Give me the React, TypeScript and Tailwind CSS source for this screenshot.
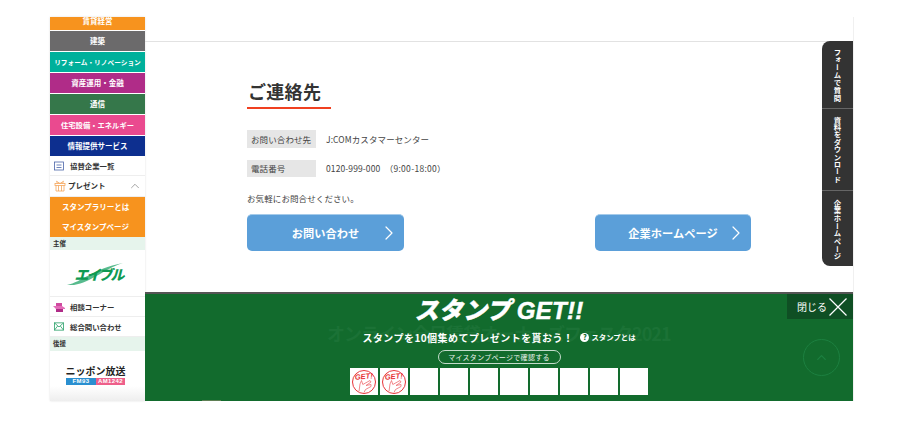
import { ChevronUp, ChevronRight } from "lucide-react";

const JP = "font-['Noto_Sans_CJK_JP','Noto_Sans',sans-serif]";

const CATEGORIES = [
  { label: "建築", cls: "bg-[#6b6a6b] text-[7.5px]" },
  { label: "リフォーム・リノベーション", cls: "bg-[#00b09b] text-[6.7px]" },
  { label: "資産運用・金融", cls: "bg-[#b02c88] text-[7.5px]" },
  { label: "通信", cls: "bg-[#35774a] text-[7.5px]" },
  { label: "住宅設備・エネルギー", cls: "bg-[#ea4a8f] text-[7.3px]" },
  { label: "情報提供サービス", cls: "bg-[#0d2f8f] text-[7.5px]" },
];

function Stamp() {
  return (
    <svg viewBox="0 0 28 28" className="w-7 h-7">
      <circle cx="14" cy="14" r="11.5" fill="none" stroke="#e8343a" strokeWidth="1" />
      <text x="14" y="11" textAnchor="middle" fontSize="7.5" fontWeight="900" fontStyle="italic" fill="#e8343a" fontFamily="Liberation Sans, sans-serif" transform="rotate(-4 14 11)">
        GET!
      </text>
      <path d="M9 23.5 L10 16 L11.5 12.5 L12.8 16.5 L20 12.5 L21 14 L16 17.5 L21 16.5 L21 18.5 L15.5 21.5 L14 24.5" fill="none" stroke="#ef6a6e" strokeWidth="0.8" />
    </svg>
  );
}

function SideLink({ icon, label }: { icon: React.ReactNode; label: string }) {
  return (
    <div className="h-5 flex items-center gap-[5px] pl-[3px] border-b border-[#eeeeee] text-[7.4px] font-bold text-[#333333]">
      <span className="w-[12px] flex justify-center">{icon}</span>
      {label}
    </div>
  );
}

function BlueButton({ label, w }: { label: string; w: string }) {
  return (
    <button className={`${w} relative h-[37px] bg-[#5b9fd9] rounded-[5px] border-t border-[#a5cbea] text-white text-[11.2px] font-bold tracking-[0.1px] flex items-center justify-center`}>
      {label}
      <ChevronRight className="absolute right-[3px] w-6 h-6" strokeWidth={1.2} />
    </button>
  );
}

export default function App() {
  return (
    <div className={`${JP} w-[908px] h-[438px] bg-white pt-[17px] pl-[50px] overflow-hidden`}>
      <div className="flex w-[804px] h-[384px]">
        {/* Sidebar */}
        <aside className="w-[95px] shrink-0 flex flex-col shadow-[0_0_2px_rgba(0,0,0,0.12)]">
          <div className="h-[13px] bg-[#f7931e] text-white text-[7.5px] font-bold text-center leading-[7px] overflow-hidden">賃貸経営</div>
          <div className="flex flex-col gap-px mt-px">
            {CATEGORIES.map((c) => (
              <div key={c.label} className={`${c.cls} h-5 flex items-center justify-center text-white font-bold whitespace-nowrap`}>
                {c.label}
              </div>
            ))}
          </div>
          <SideLink
            label="協賛企業一覧"
            icon={
              <svg viewBox="0 0 10 10" className="w-[10px] h-[10px]" fill="none" stroke="#4a64a8" strokeWidth="0.8">
                <rect x="0.5" y="1" width="9" height="8" />
                <path d="M2.5 4h5M2.5 6.5h5" />
              </svg>
            }
          />
          <div className="h-[21px] flex items-center pl-[4px] pr-[3px] border-b border-[#eeeeee] text-[7.5px] font-bold text-[#333333]">
            <svg viewBox="0 0 12 12" className="w-[12px] h-[12px] mr-[2px]" fill="none" stroke="#f5a65b" strokeWidth="0.8">
              <rect x="1" y="3.5" width="10" height="2" />
              <path d="M2 5.5V11h8V5.5M4.5 5.5V11M7.5 5.5V11M3.5 3.5L2.5 1.2 6 3.5 9.5 1.2 8.5 3.5" />
            </svg>
            プレゼント
            <ChevronUp className="w-[14px] h-[14px] ml-auto text-[#888888]" strokeWidth={1.3} />
          </div>
          <div className="h-10 bg-[#f7931e] flex flex-col text-white text-[7.5px] font-bold">
            <div className="h-5 flex items-center pl-[12px]">スタンプラリーとは</div>
            <div className="h-5 flex items-center pl-[12px]">マイスタンプページ</div>
          </div>
          <div className="h-[13px] bg-[#e6f4ec] flex items-center pl-[3px] text-[6.5px] font-bold text-[#333333]">主催</div>
          <div className="h-[47px] border-b border-[#eeeeee] flex items-center justify-center relative">
            <svg viewBox="0 0 58 24" className="absolute left-[16px] top-[12px] w-[58px] h-[24px]">
              <path d="M1 23 C16 20 26 7 57 1 C36 8 26 20 8 23 Z" fill="#20a468" opacity="0.75" />
            </svg>
            <span className="relative mt-[1px] ml-[2px] text-[#0f9a52] text-[14px] font-black italic tracking-[-2px] leading-none">エイブル</span>
          </div>
          <SideLink
            label="相談コーナー"
            icon={
              <svg viewBox="0 0 12 10" className="w-[12px] h-[10px]">
                <path d="M3 1h6v3H3z" fill="#d04aa0" />
                <path d="M0 4h9l3 2v1H3z" fill="#e36cb8" />
                <path d="M3 7h7v3H3z" fill="#b02c88" />
              </svg>
            }
          />
          <SideLink
            label="総合問い合わせ"
            icon={
              <svg viewBox="0 0 11 9" className="w-[10px] h-[9px]" fill="none" stroke="#2ea36c" strokeWidth="0.9">
                <rect x="0.5" y="0.5" width="10" height="8" />
                <path d="M0.5 0.5l5 4.5 5-4.5M0.5 8.5l3.5-4.5M10.5 8.5L7 4" />
              </svg>
            }
          />
          <div className="h-[14px] bg-[#e6f4ec] flex items-center pl-[3px] text-[6.5px] font-bold text-[#333333]">後援</div>
          <div className="flex-1 bg-gradient-to-b from-white from-70% to-[#eeeeee] flex flex-col items-center pt-[14px] pr-[4px]">
            <div className="text-[10px] leading-[12px] font-bold text-[#222222] whitespace-nowrap">ニッポン放送</div>
            <div className="flex h-[7px] mt-px text-white text-[6px] leading-[7px] font-bold font-['Liberation_Sans',sans-serif] tracking-[0.4px]">
              <span className="w-[30px] bg-[#2a8fd0] text-center">FM93</span>
              <span className="w-[29px] bg-[#ee5f8a] text-center">AM1242</span>
            </div>
          </div>
        </aside>

        {/* Main */}
        <main className="relative flex-1 flex flex-col border-r border-[#f0f0f0] min-w-0">
          <div className="h-[25px] shrink-0 border-b border-[#e2e2e2]" />
          <div className="flex-1 px-[102px]">
            <h2 className="mt-[36px] w-[84px] h-[31px] pl-px text-[18px] leading-[26px] font-bold text-[#333333] border-b-2 border-[#f04020] tracking-[0.3px]">ご連絡先</h2>
            <div className="mt-[21px] flex items-center h-[18px] text-[8.5px] text-[#444444] tracking-[0.1px]">
              <span className="w-[69px] h-[18px] bg-[#e6e6e6] flex items-center pl-[4px]">お問い合わせ先</span>
              <span className="ml-[10px]">J:COMカスタマーセンター</span>
            </div>
            <div className="mt-[12px] flex items-center h-[17px] text-[8.5px] text-[#444444] tracking-[0.1px]">
              <span className="w-[69px] h-[17px] bg-[#e6e6e6] flex items-center pl-[4px]">電話番号</span>
              <span className="ml-[10px] whitespace-pre">0120-999-000　<span className="tracking-[0.3px]">（9:00-18:00）</span></span>
            </div>
            <p className="mt-[15px] text-[8.5px] leading-[12px] text-[#444444] tracking-[0.1px]">お気軽にお問合せください。</p>
            <div className="mt-[10px] flex justify-between">
              <BlueButton label="お問い合わせ" w="w-[157px]" />
              <BlueButton label="企業ホームページ" w="w-[156px]" />
            </div>
          </div>

          {/* Stamp bar */}
          <section className="relative h-[109px] shrink-0 bg-[#126b2d] border-t-2 border-[#555555] flex flex-col items-center overflow-hidden">
            <span className="absolute left-[182px] top-[26px] text-[18px] font-bold text-[#1b7236] whitespace-nowrap tracking-[-1px]">オンライン全日賃貸オーナーズフェスタ2021</span>
            <span className="absolute left-[57px] bottom-0 w-[19px] h-px bg-[#5f7f55]" />
            <div className="relative h-[30px] text-[24px] leading-[30px] font-black italic text-white tracking-[0.3px] [-webkit-text-stroke:0.5px_white]">
              スタンプ <span className="font-['Liberation_Sans',sans-serif]">GET!!</span>
            </div>
            <div className="relative mt-[5px] h-[16px] flex items-center text-white font-bold whitespace-nowrap">
              <span className="text-[10px] tracking-[0.45px]">スタンプを10個集めてプレゼントを貰おう！</span>
              <span className="ml-[7px] w-[9px] h-[9px] rounded-full bg-white text-[#126b2d] text-[7px] leading-[9px] text-center font-black">?</span>
              <span className="ml-[2px] text-[7.4px]">スタンプとは</span>
            </div>
            <div className="relative mt-[5px] w-[123px] h-[14px] rounded-full border border-[#c4dccb] text-[#e8f2eb] text-[7px] leading-[12px] text-center tracking-[0.3px]">マイスタンプページで確認する</div>
            <div className="relative mt-[4px] flex gap-[2px]">
              {Array.from({ length: 10 }, (_, i) => (
                <div key={i} className="w-[28px] h-[27px] bg-white flex items-center justify-center">
                  {i < 2 && <Stamp />}
                </div>
              ))}
            </div>

            <div className="absolute right-0 top-0 w-[66px] h-[25px] bg-[#0f4f24] flex items-center pl-[10px] text-white text-[10px]">
              閉じる
              <svg viewBox="0 0 18 18" className="ml-[2px] w-[18px] h-[18px] shrink-0" stroke="white" strokeWidth="1.2">
                <path d="M0.5 0.5L17.5 17.5M17.5 0.5L0.5 17.5" />
              </svg>
            </div>
            <div className="absolute right-[13px] top-[45px] w-[37px] h-[37px] rounded-full border border-[#1c8040] flex items-center justify-center">
              <ChevronUp className="w-[15px] h-[15px] text-[#1c8040]" strokeWidth={2} />
            </div>
          </section>

          {/* Side tabs */}
          <div className="absolute right-0 top-[24px] w-[31px] h-[225px] bg-[#333333] rounded-l-[8px] flex flex-col text-white text-[7.4px] font-bold">
            <div className="h-[68px] border-b border-[#666666] flex justify-center pt-[7px]">
              <span className="[writing-mode:vertical-rl] tracking-[0.3px]">フォームで質問</span>
            </div>
            <div className="h-[82px] border-b border-[#666666] flex justify-center pt-[7px]">
              <span className="[writing-mode:vertical-rl]">資料をダウンロード</span>
            </div>
            <div className="flex-1 flex justify-center pt-[8px]">
              <span className="[writing-mode:vertical-rl] tracking-[0.3px]">企業ホームページ</span>
            </div>
          </div>
        </main>
      </div>
    </div>
  );
}
